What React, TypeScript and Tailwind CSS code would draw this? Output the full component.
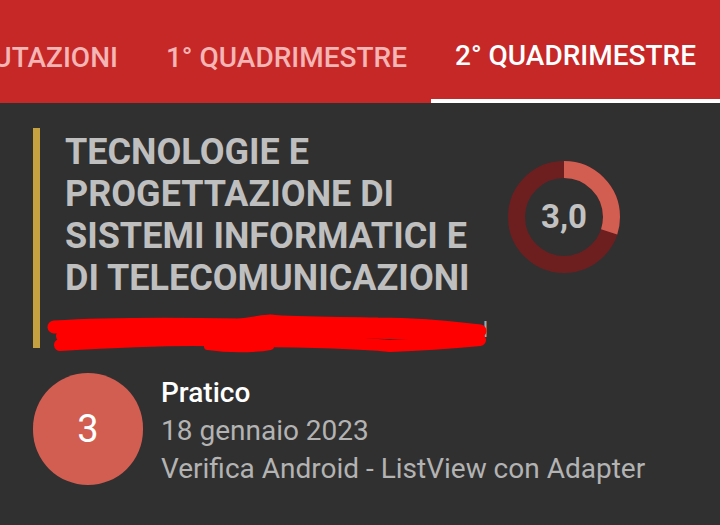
import React from "react";

function Donut({ value, fraction }: { value: string; fraction: number }) {
  const r = 47.5;
  const c = 2 * Math.PI * r;
  return (
    <div className="relative h-[112px] w-[112px]">
      <svg width="112" height="112" viewBox="0 0 112 112" className="-rotate-90">
        <circle cx="56" cy="56" r={r} fill="none" stroke="#6d1f20" strokeWidth="17" />
        <circle
          cx="56"
          cy="56"
          r={r}
          fill="none"
          stroke="#d25e52"
          strokeWidth="17"
          strokeDasharray={`${c * fraction} ${c}`}
        />
      </svg>
      <div className="absolute inset-0 flex items-center justify-center text-[33px] font-bold text-[#c2c2c2]">
        {value}
      </div>
    </div>
  );
}

export default function App() {
  const tabs = [
    { label: "VALUTAZIONI", active: false },
    { label: "1° QUADRIMESTRE", active: false },
    { label: "2° QUADRIMESTRE", active: true },
  ];

  return (
    <div className="h-[525px] w-[720px] overflow-hidden bg-[#303030]" style={{ fontFamily: "Roboto, 'Noto Sans', sans-serif" }}>
      <div className="relative h-[103px] overflow-hidden bg-[#c62828]">
        <div className="absolute bottom-0 right-0 flex">
          {tabs.map((t) => (
            <div
              key={t.label}
              className={`flex h-[103px] items-center justify-center whitespace-nowrap px-6 pt-[13px] text-[28px] font-medium ${
                t.active ? "w-[289px] border-b-4 border-white text-white" : "text-[#f4b5b5]"
              }`}
            >
              {t.label}
            </div>
          ))}
        </div>
      </div>

      <div className="flex pl-[33px] pt-[25px]">
        <div className="w-[7px] self-stretch bg-[#c6a13f]" />
        <div className="flex flex-col pl-[25px]">
          <div className="flex items-center">
            <div className="w-[420px] pt-[3px] text-[36px] font-bold leading-[42px] text-[#bfbfbf]">
              TECNOLOGIE E PROGETTAZIONE DI SISTEMI INFORMATICI E DI TELECOMUNICAZIONI
            </div>
            <div className="ml-[23px] mt-[6px]">
              <Donut value="3,0" fraction={0.3} />
            </div>
          </div>
          {/* teacher name, scribbled over in the screenshot */}
          <div className="relative mt-[10px] h-[39px] w-[440px] pt-[8px] text-[22px] leading-[26px] text-[#a8a8a8]">
            <span className="pl-[120px]">i</span>
            <span className="pl-[140px]">p</span>
            <span className="pl-[140px]">l</span>
            <svg className="absolute left-[-27px] top-[2px]" width="460" height="50" viewBox="0 0 460 50">
              <g fill="none" stroke="#ff0000" strokeLinecap="round" strokeLinejoin="round">
                <path d="M16 16 C 80 12, 150 13, 200 14 C 215 13, 225 10, 232 10 C 260 13, 300 12, 340 13 C 380 13, 410 16, 442 20" strokeWidth="13" />
                <path d="M22 34 C 90 30, 160 28, 192 30 C 240 30, 300 30, 352 35 C 380 34, 410 32, 442 29" strokeWidth="12" />
                <path d="M24 25 C 120 20, 220 20, 300 21 C 360 22, 410 24, 440 25" strokeWidth="12" />
                <path d="M170 35 C 190 38, 215 38, 232 35" strokeWidth="8" />
              </g>
            </svg>
          </div>
        </div>
      </div>

      <div className="mt-[25px] flex items-start pl-[33px]">
        <div className="flex h-[112px] w-[110px] items-center justify-center rounded-full bg-[#d25e52] text-[38px] text-white">
          3
        </div>
        <div className="ml-[18px] flex flex-col pt-[1px]">
          <div className="text-[28px] font-medium leading-[38px] text-white">Pratico</div>
          <div className="text-[28px] leading-[38px] text-[#b3b3b3]">18 gennaio 2023</div>
          <div className="text-[28px] leading-[38px] text-[#b3b3b3]">Verifica Android - ListView con Adapter</div>
        </div>
      </div>
    </div>
  );
}
